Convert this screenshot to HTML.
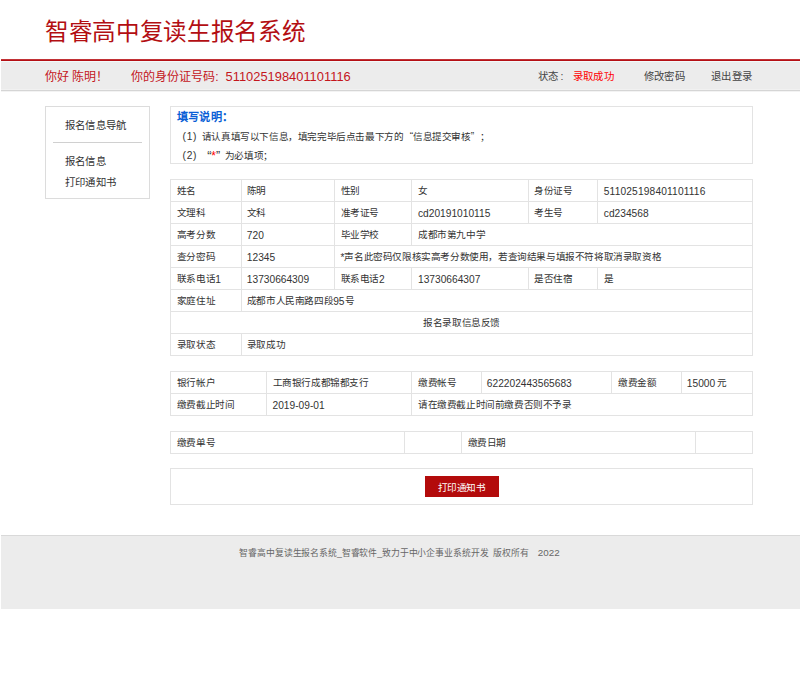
<!DOCTYPE html>
<html lang="zh-CN"><head><meta charset="utf-8">
<style>
html,body{margin:0;padding:0}
body{width:800px;height:679px;position:relative;overflow:hidden;background:#fff;font-family:"Liberation Sans",sans-serif;color:#333}
.a{position:absolute}
.t{position:absolute;white-space:nowrap;line-height:12px;height:12px}
.s{font-size:9.6px;letter-spacing:-0.4px}
.n{font-size:10.2px;letter-spacing:0}
.nd{font-size:10.2px;letter-spacing:0;position:relative;top:1px}
.m{font-size:10.4px;letter-spacing:0.4px}
.ql{display:inline-block;width:9.6px;text-align:right;letter-spacing:0;font-size:10.2px}
.qr{display:inline-block;width:9.6px;text-align:left;letter-spacing:0;font-size:10.2px}
.hl{position:absolute;height:1px;background:#e3e3e3}
.vl{position:absolute;width:1px;background:#e3e3e3}
.box{position:absolute;border:1px solid #e3e3e3;box-sizing:border-box}
</style></head><body>
<div class="t " style="left:45px;top:19.8px;font-size:23.6px;letter-spacing:-0.32px;line-height:24px;height:24px;color:#b30e12">智睿高中复读生报名系统</div>
<div class="a" style="left:1px;top:59px;width:799px;height:1px;background:#c23236"></div>
<div class="a" style="left:1px;top:60px;width:799px;height:1px;background:#b51015"></div>
<div class="a" style="left:1px;top:61px;width:799px;height:1px;background:#f3fafa"></div>
<div class="a" style="left:1px;top:62px;width:799px;height:27px;background:#ececec"></div>
<div class="a" style="left:1px;top:89px;width:799px;height:1px;background:#f1f1f1"></div>
<div class="a" style="left:1px;top:90px;width:799px;height:1px;background:#d5d5d5"></div>
<div class="a" style="left:1px;top:91px;width:799px;height:1px;background:#f3f3f3"></div>
<div class="t " style="left:45px;top:71px;font-size:12px;color:#c4161c">你好 陈明！</div>
<div class="t " style="left:131px;top:71px;font-size:12px;color:#c4161c">你的身份证号码</div>
<div class="t " style="left:215.2px;top:71px;font-size:12px;color:#c4161c">:</div>
<div class="t " style="left:225.5px;top:71.3px;font-size:12.9px;color:#c4161c">511025198401101116</div>
<div class="t m" style="left:538px;top:71px;color:#444">状态</div>
<div class="t m" style="left:560.5px;top:71px;color:#444">:</div>
<div class="t m" style="left:572.5px;top:71px;color:#f00">录取成功</div>
<div class="t m" style="left:643.5px;top:71px;color:#444">修改密码</div>
<div class="t m" style="left:710.8px;top:71px;color:#444">退出登录</div>
<div class="box" style="left:45px;top:106px;width:105px;height:93px;border-color:#dcdcdc"></div>
<div class="t m" style="left:64.5px;top:120.3px;">报名信息导航</div>
<div class="a" style="left:53px;top:142px;width:89px;height:1px;background:#d0d0d0"></div>
<div class="t m" style="left:64.5px;top:156.3px;">报名信息</div>
<div class="t m" style="left:64.5px;top:176.7px;">打印通知书</div>
<div class="box" style="left:170px;top:106px;width:583px;height:58px"></div>
<div class="t " style="left:177px;top:111.2px;font-size:11.2px;letter-spacing:0.2px;font-weight:bold;color:#0a5fd6">填写说明：</div>
<div class="t n" style="left:182.6px;top:130.8px;letter-spacing:0.7px">(1)</div>
<div class="t s" style="left:201.9px;top:130.8px;">请认真填写以下信息，填完完毕后点击最下方的<span class="ql">“</span>信息提交审核<span class="qr">”</span>；</div>
<div class="t n" style="left:182.6px;top:149.5px;letter-spacing:0.7px">(2)</div>
<div class="t " style="left:207.2px;top:150px;font-size:12.5px;color:#333">“</div>
<div class="t " style="left:211.3px;top:149.5px;font-size:12px;color:#f00">*</div>
<div class="t " style="left:215.9px;top:150px;font-size:12.5px;color:#333">”</div>
<div class="t s" style="left:224.8px;top:149.5px;">为必填项；</div>
<div class="box" style="left:170px;top:179px;width:583px;height:177px"></div>
<div class="hl" style="left:170px;top:201px;width:583px"></div>
<div class="hl" style="left:170px;top:223px;width:583px"></div>
<div class="hl" style="left:170px;top:245px;width:583px"></div>
<div class="hl" style="left:170px;top:267px;width:583px"></div>
<div class="hl" style="left:170px;top:289px;width:583px"></div>
<div class="hl" style="left:170px;top:311px;width:583px"></div>
<div class="hl" style="left:170px;top:333px;width:583px"></div>
<div class="vl" style="left:241px;top:179px;height:22px"></div>
<div class="vl" style="left:334px;top:179px;height:22px"></div>
<div class="vl" style="left:411px;top:179px;height:22px"></div>
<div class="vl" style="left:528px;top:179px;height:22px"></div>
<div class="vl" style="left:597px;top:179px;height:22px"></div>
<div class="vl" style="left:241px;top:201px;height:22px"></div>
<div class="vl" style="left:334px;top:201px;height:22px"></div>
<div class="vl" style="left:411px;top:201px;height:22px"></div>
<div class="vl" style="left:528px;top:201px;height:22px"></div>
<div class="vl" style="left:597px;top:201px;height:22px"></div>
<div class="vl" style="left:241px;top:223px;height:22px"></div>
<div class="vl" style="left:334px;top:223px;height:22px"></div>
<div class="vl" style="left:411px;top:223px;height:22px"></div>
<div class="vl" style="left:241px;top:245px;height:22px"></div>
<div class="vl" style="left:334px;top:245px;height:22px"></div>
<div class="vl" style="left:241px;top:267px;height:22px"></div>
<div class="vl" style="left:334px;top:267px;height:22px"></div>
<div class="vl" style="left:411px;top:267px;height:22px"></div>
<div class="vl" style="left:528px;top:267px;height:22px"></div>
<div class="vl" style="left:597px;top:267px;height:22px"></div>
<div class="vl" style="left:241px;top:289px;height:22px"></div>
<div class="vl" style="left:241px;top:333px;height:22px"></div>
<div class="t s" style="left:176.8px;top:184.5px;">姓名</div>
<div class="t s" style="left:246.8px;top:184.5px;">陈明</div>
<div class="t s" style="left:340.5px;top:184.5px;">性别</div>
<div class="t s" style="left:418px;top:184.5px;">女</div>
<div class="t s" style="left:534.3px;top:184.5px;">身份证号</div>
<div class="t s" style="left:603.8px;top:184.5px;"><span class="nd" style="letter-spacing:0.15px">511025198401101116</span></div>
<div class="t s" style="left:176.8px;top:206.5px;">文理科</div>
<div class="t s" style="left:246.8px;top:206.5px;">文科</div>
<div class="t s" style="left:340.5px;top:206.5px;">准考证号</div>
<div class="t s" style="left:418px;top:206.5px;"><span class="nd">cd20191010115</span></div>
<div class="t s" style="left:534.3px;top:206.5px;">考生号</div>
<div class="t s" style="left:603.8px;top:206.5px;"><span class="nd">cd234568</span></div>
<div class="t s" style="left:176.8px;top:228.5px;">高考分数</div>
<div class="t s" style="left:246.8px;top:228.5px;"><span class="nd">720</span></div>
<div class="t s" style="left:340.5px;top:228.5px;">毕业学校</div>
<div class="t s" style="left:418px;top:228.5px;">成都市第九中学</div>
<div class="t s" style="left:176.8px;top:250.5px;">查分密码</div>
<div class="t s" style="left:246.8px;top:250.5px;"><span class="nd">12345</span></div>
<div class="t s" style="left:340.5px;top:250.5px;"><span class="nd">*</span>声名此密码仅限核实高考分数使用，若查询结果与填报不符将取消录取资格</div>
<div class="t s" style="left:176.8px;top:272.5px;">联系电话<span class="nd">1</span></div>
<div class="t s" style="left:246.8px;top:272.5px;"><span class="nd">13730664309</span></div>
<div class="t s" style="left:340.5px;top:272.5px;">联系电话<span class="nd">2</span></div>
<div class="t s" style="left:418px;top:272.5px;"><span class="nd">13730664307</span></div>
<div class="t s" style="left:534.3px;top:272.5px;">是否住宿</div>
<div class="t s" style="left:603.8px;top:272.5px;">是</div>
<div class="t s" style="left:176.8px;top:294.5px;">家庭住址</div>
<div class="t s" style="left:246.8px;top:294.5px;">成都市人民南路四段<span class="nd">95</span>号</div>
<div class="t s" style="left:423.3px;top:316.5px;">报名录取信息反馈</div>
<div class="t s" style="left:176.8px;top:338.5px;">录取状态</div>
<div class="t s" style="left:246.8px;top:338.5px;">录取成功</div>
<div class="box" style="left:170px;top:371px;width:583px;height:45px"></div>
<div class="hl" style="left:170px;top:393px;width:583px"></div>
<div class="vl" style="left:266px;top:371px;height:44px"></div>
<div class="vl" style="left:411px;top:371px;height:44px"></div>
<div class="vl" style="left:481px;top:371px;height:22px"></div>
<div class="vl" style="left:611px;top:371px;height:22px"></div>
<div class="vl" style="left:681px;top:371px;height:22px"></div>
<div class="t s" style="left:176.8px;top:376.5px;">银行帐户</div>
<div class="t s" style="left:272.5px;top:376.5px;">工商银行成都锦都支行</div>
<div class="t s" style="left:418px;top:376.5px;">缴费帐号</div>
<div class="t s" style="left:486.8px;top:376.5px;"><span class="nd">622202443565683</span></div>
<div class="t s" style="left:618px;top:376.5px;">缴费金额</div>
<div class="t s" style="left:686.8px;top:376.5px;"><span class="nd">15000</span> 元</div>
<div class="t s" style="left:176.8px;top:398.5px;">缴费截止时间</div>
<div class="t s" style="left:272.5px;top:398.5px;"><span class="nd">2019-09-01</span></div>
<div class="t s" style="left:418px;top:398.5px;">请在缴费截止时间前缴费否则不予录</div>
<div class="box" style="left:170px;top:431px;width:583px;height:23px"></div>
<div class="vl" style="left:404px;top:431px;height:22px"></div>
<div class="vl" style="left:461px;top:431px;height:22px"></div>
<div class="vl" style="left:695px;top:431px;height:22px"></div>
<div class="t s" style="left:176.8px;top:436.5px;">缴费单号</div>
<div class="t s" style="left:467.5px;top:436.5px;">缴费日期</div>
<div class="box" style="left:170px;top:468px;width:583px;height:37px"></div>
<div class="a" style="left:425px;top:476px;width:74px;height:21px;background:#b30b0b"></div>
<div class="t " style="left:437.5px;top:481.5px;font-size:9.6px;letter-spacing:-0.4px;color:#fff">打印通知书</div>
<div class="a" style="left:1px;top:535px;width:799px;height:1px;background:#d9d9d9"></div>
<div class="a" style="left:1px;top:536px;width:799px;height:73px;background:#ececec"></div>
<div class="t " style="left:239.4px;top:547px;font-size:8.8px;letter-spacing:-0.13px;color:#666">智睿高中复读生报名系统_智睿软件_致力于中小企事业系统开发</div>
<div class="t " style="left:493.3px;top:547px;font-size:8.8px;letter-spacing:-0.13px;color:#666">版权所有</div>
<div class="t " style="left:537.8px;top:547px;font-size:9.8px;color:#666">2022</div>
</body></html>
